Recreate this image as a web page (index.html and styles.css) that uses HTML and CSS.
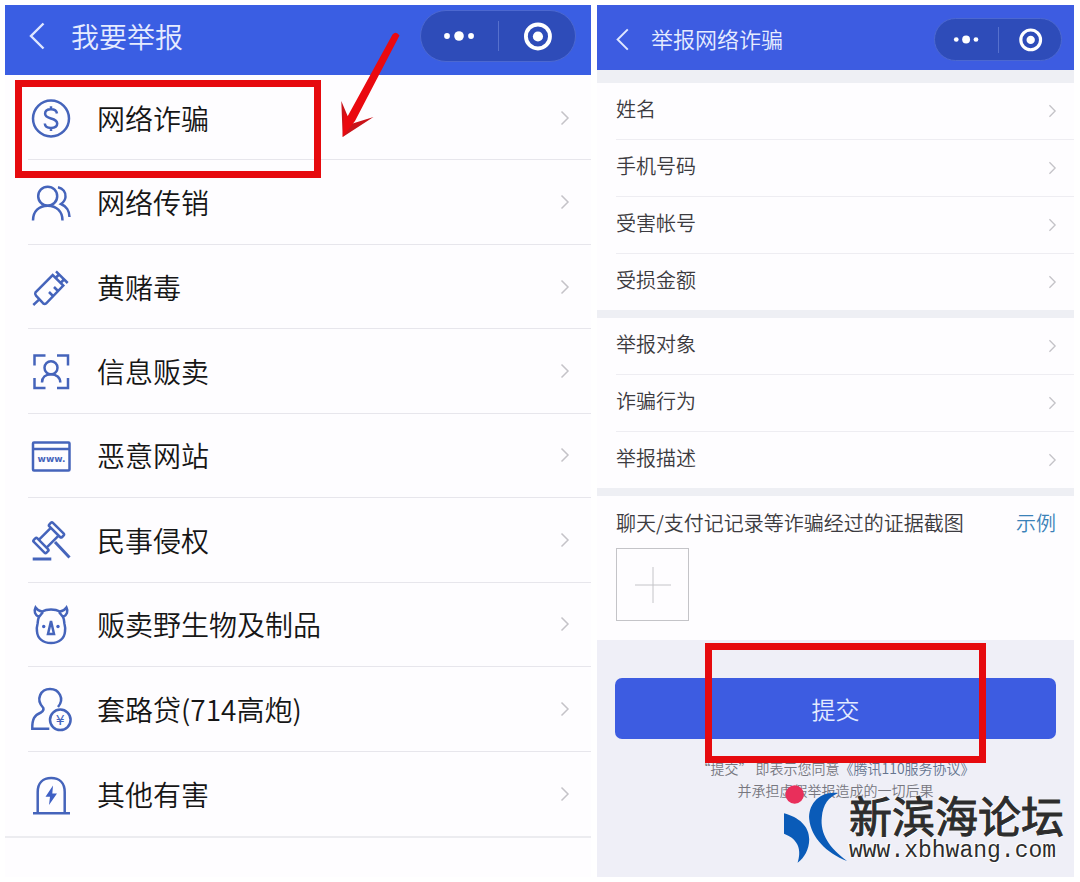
FILE: index.html
```html
<!DOCTYPE html>
<html lang="zh-CN">
<head>
<meta charset="utf-8">
<meta name="viewport" content="width=device-width, initial-scale=1">
<title>我要举报</title>
<link rel="stylesheet" href="styles.css">
</head>
<body>
<svg class="defs" aria-hidden="true">
  <symbol id="more" viewBox="0 0 78 52"><circle cx="26" cy="26" r="3"/><circle cx="38.500" cy="26" r="5"/><circle cx="51" cy="26" r="3"/></symbol>
  <symbol id="target" viewBox="0 0 78 52"><circle cx="40.500" cy="26.500" r="12.500" fill="none" stroke="currentColor" stroke-width="4"/><circle cx="40.500" cy="26.500" r="5.300"/></symbol>
  <symbol id="back" viewBox="0 0 16 28"><path d="M14.500 1.500 2 14l12.500 12.500" fill="none" stroke="currentColor" stroke-width="2.400"/></symbol>
  <symbol id="next" viewBox="0 0 10 16"><path d="M1.500 1.500 8 8l-6.500 6.500" fill="none" stroke="currentColor" stroke-width="1.500"/></symbol>
</svg>
<main class="page">
  <section class="panel menu">
    <header class="bar">
      <button class="back" aria-label="返回"><svg><use href="#back"/></svg></button>
      <h1 class="title">我要举报</h1>
      <div class="capsule">
        <button aria-label="更多"><svg><use href="#more"/></svg></button>
        <button aria-label="关闭"><svg><use href="#target"/></svg></button>
      </div>
    </header>
    <ul class="list">
      <li><button class="item">
        <svg class="icon" viewBox="0 0 44 44"><circle cx="22" cy="22.500" r="18"/><path d="M28 17.500C27.500 14.500 25 13.300 22 13.300c-3.500 0-5.900 1.700-5.900 4.500 0 2.800 2.400 3.700 5.900 4.700 4 1.100 6.200 2.300 6.200 5 0 2.800-2.500 4.400-6.200 4.400s-6-1.500-6.200-4.400M22 10.300v3.200M22 31.700v3.200"/></svg>
        <span class="name">网络诈骗</span><svg class="next"><use href="#next"/></svg></button>
        <span class="mark mark-item"></span></li>
      <li><button class="item">
        <svg class="icon" viewBox="0 0 44 44"><circle cx="18.700" cy="16.200" r="9.500"/><path d="M4 40.500c0-9 6-14.800 14.700-14.800s14.800 5.800 14.800 14.800M29 7.300c5 1.200 7.900 5 7.500 9.700-.3 3.500-2 5.200-4.500 7 5 2 8.500 7 8.500 13"/></svg>
        <span class="name">网络传销</span><svg class="next"><use href="#next"/></svg></button></li>
      <li><button class="item">
        <svg class="icon" viewBox="0 0 44 44"><path d="M6.500 27.300 23.700 10l10.600 10.600L17 38.500c-1 .8-2 .6-3-.3l-7-7.500c-1-1.200-1-2.400-.5-3.400zM4.300 40l6-5.600M27 6.300 38.700 18M26.500 13l4-4M31.500 18l4-4M29 26l-4-4M24 31l-4-4"/></svg>
        <span class="name">黄赌毒</span><svg class="next"><use href="#next"/></svg></button></li>
      <li><button class="item">
        <svg class="icon" viewBox="0 0 44 44"><path d="M5.500 16.500v-10h11M28 6.500h11v10M39 29v10H28M16.500 39h-11V29"/><circle cx="22" cy="18.800" r="6.500"/><path d="M13 33.500c0-5 3.600-8.200 9-8.200s9.300 3.200 9.300 8.200"/></svg>
        <span class="name">信息贩卖</span><svg class="next"><use href="#next"/></svg></button></li>
      <li><button class="item">
        <svg class="icon" viewBox="0 0 44 44"><rect x="4" y="9.500" width="36.500" height="28" rx="1"/><path d="M4 16h36.500"/><text class="glyph" x="22.500" y="29" font-size="9">www.</text></svg>
        <span class="name">恶意网站</span><svg class="next"><use href="#next"/></svg></button></li>
      <li><button class="item">
        <svg class="icon" viewBox="0 0 44 44"><g transform="translate(19.700 19.700) rotate(-45)"><rect x="8.500" y="-9" width="5" height="18" rx="1.500"/><rect x="-13.500" y="-9" width="5" height="18" rx="1.500"/><path d="M-8.500-5.500h17M-8.500 5.500h17"/></g><path d="M26 24 40.500 39.500" stroke-width="3"/><path d="M3.700 41h18.600" stroke-width="3"/></svg>
        <span class="name">民事侵权</span><svg class="next"><use href="#next"/></svg></button></li>
      <li><button class="item">
        <svg class="icon" viewBox="0 0 44 44"><path d="M13 9.500c5-2.800 13-2.800 18 0 2.500-.3 5-1.800 6.500-4 1.800 3.500.7 7.500-3.500 9.500 1.500 3 1 5 1.500 7 .6 2 .9 4 .5 7.500C35.500 36.500 30 41 22 41S8.500 36.500 8 29.500c-.4-3.500-.1-5.500.5-7.500.5-2 0-4 1.500-7-4.200-2-5.300-6-3.500-9.500 1.500 2.200 4 3.700 6.500 4zM10 15l4-5M34 15l-4-5M22 19l-3 13h6z"/><circle class="solid" cx="14.700" cy="24.500" r="1.700"/><circle class="solid" cx="29" cy="24.500" r="1.700"/></svg>
        <span class="name">贩卖野生物及制品</span><svg class="next"><use href="#next"/></svg></button></li>
      <li><button class="item">
        <svg class="icon" viewBox="0 0 44 44"><path d="M29 20c7-8.500 1-18-8-18s-15 10-6.700 19c.7 2-.3 3.300-2.300 4.500C5.500 28 3 32 3.300 41.800h17"/><circle cx="31.300" cy="32.800" r="10.300"/><text class="glyph yen" x="31.300" y="38" font-size="14">¥</text></svg>
        <span class="name">套路贷(714高炮)</span><svg class="next"><use href="#next"/></svg></button></li>
      <li><button class="item">
        <svg class="icon" viewBox="0 0 44 44"><path d="M8.700 41V20C8.700 11 14 6 22.200 6s13.500 5 13.500 14v21M4 41.200h37"/><path class="solid" d="m24 13.500-7.500 11.300H21L20 33l8-11.600h-4.700z"/></svg>
        <span class="name">其他有害</span><svg class="next"><use href="#next"/></svg></button></li>
    </ul>
    <svg class="arrow" viewBox="0 0 60 108"><path class="barb" d="M1.300 69 2.700 105 33.500 85 11 92z"/><path class="shaft" d="M52.500 2.500q3.500-4 7 1L15 89l-12.300 16L4 80l3.500 4.500z"/></svg>
  </section>

  <section class="panel report">
    <header class="bar bar-small">
      <button class="back" aria-label="返回"><svg><use href="#back"/></svg></button>
      <h2 class="title">举报网络诈骗</h2>
      <div class="capsule">
        <button aria-label="更多"><svg><use href="#more"/></svg></button>
        <button aria-label="关闭"><svg><use href="#target"/></svg></button>
      </div>
    </header>
    <div class="groups">
      <ul class="fields">
        <li><button class="field"><span>姓名</span><svg class="next"><use href="#next"/></svg></button></li>
        <li><button class="field"><span>手机号码</span><svg class="next"><use href="#next"/></svg></button></li>
        <li><button class="field"><span>受害帐号</span><svg class="next"><use href="#next"/></svg></button></li>
        <li><button class="field"><span>受损金额</span><svg class="next"><use href="#next"/></svg></button></li>
      </ul>
      <ul class="fields">
        <li><button class="field"><span>举报对象</span><svg class="next"><use href="#next"/></svg></button></li>
        <li><button class="field"><span>诈骗行为</span><svg class="next"><use href="#next"/></svg></button></li>
        <li><button class="field"><span>举报描述</span><svg class="next"><use href="#next"/></svg></button></li>
      </ul>
      <div class="evidence">
        <div class="evidence-head"><span>聊天/支付记记录等诈骗经过的证据截图</span><a href="#">示例</a></div>
        <button class="add" aria-label="添加截图"><svg viewBox="0 0 36 36"><path d="M18 0v36M0 18h36"/></svg></button>
      </div>
    </div>
    <div class="submit-area">
      <button class="submit">提交</button>
      <p class="terms">“提交” 即表示您同意<a href="#">《腾讯110服务协议》</a><br>并承担虚假举报造成的一切后果</p>
      <span class="mark mark-submit"></span>
    </div>
    <div class="brand">
      <svg class="brand-logo" viewBox="0 0 66 82"><circle cx="11" cy="9.500" r="9.500" fill="#e92f5b"/><path d="M0 29c15 4 26 13 26 27 0 10-5 19-12 24 4-12 2-24-14-30z"/><path d="M56 8C35 6 25 21 26 35c2 19 18 35 39 43C47 65 37 50 39 33 40 20 46 12 56 8z"/></svg>
      <div class="brand-text"><strong>新滨海论坛</strong><span>www.xbhwang.com</span></div>
    </div>
  </section>
</main>
</body>
</html>
```
FILE: styles.css
```css
* { box-sizing: border-box; }

body {
  margin: 0;
  background: #fff;
  color: #161616;
  font-family: "Noto Sans CJK SC", sans-serif;
  font-weight: 350;
}

button {
  padding: 0;
  border: 0;
  background: none;
  color: inherit;
  font: inherit;
  text-align: left;
}

ul { margin: 0; padding: 0; list-style: none; }
a { color: inherit; text-decoration: none; }
svg { display: block; fill: currentColor; }
.defs { position: absolute; width: 0; height: 0; }

.page {
  display: grid;
  grid-template-columns: 586fr 477fr;
  gap: 6px;
  min-height: 100vh;
  padding: 5px 6px 5px 5px;
}

.panel {
  position: relative;
  display: flex;
  flex-direction: column;
  background: #fefdff;
}

/* Title bars */
.bar {
  display: flex;
  align-items: center;
  height: 70px;
  padding: 0 15px 8px 24px;
  background: #3a5ee3;
  color: #fff;
}
.back { width: 16px; color: #dfe7ff; }
.back svg { width: 16px; height: 28px; }
.title {
  flex: 1;
  margin: 0 0 0 26px;
  color: #e6ecff;
  font-size: 28px;
  font-weight: 350;
  line-height: 40px;
}
.capsule {
  display: flex;
  border: 1px solid #4c68d0;
  border-radius: 26px;
  background: #2e4cb9;
}
.capsule svg { width: 77px; height: 50px; }
.capsule button + button::before {
  content: "";
  position: absolute;
  height: 30px;
  margin-top: 10px;
  border-left: 1px solid #5670cd;
}

.bar-small { height: 65px; padding: 3px 12px 0 19px; background: #3d5ce1; }
.bar-small .back svg { width: 13px; height: 23px; }
.bar-small .title { margin-left: 19px; padding-bottom: 2px; font-size: 22px; line-height: 32px; }
.bar-small .capsule svg { width: 63px; height: 41px; }
.bar-small .capsule button + button::before { height: 26px; margin-top: 8px; }

/* Category list */
.menu { padding-bottom: 39px; }
.list {
  flex: 1;
  display: flex;
  flex-direction: column;
  padding-top: 1px;
  border-bottom: 2px solid #ececf0;
}
.list li { position: relative; flex: 1; display: flex; padding-left: 23px; }
.item {
  flex: 1;
  display: flex;
  align-items: center;
  padding: 0 21px 0 1px;
  border-bottom: 1px solid #e7e6ec;
}
.list li:last-child .item { border-bottom: 0; }
.icon {
  width: 44px;
  height: 44px;
  overflow: visible;
  fill: none;
  stroke: #4564bb;
  stroke-width: 2.5;
}
.icon .solid { fill: #3f60c4; stroke: none; }
.glyph {
  fill: #4564bb;
  stroke: none;
  font-family: "DejaVu Sans", sans-serif;
  font-weight: 700;
  text-anchor: middle;
}
.yen { font-weight: 400; }
.name {
  flex: 1;
  margin-left: 24px;
  font-size: 28px;
  line-height: 40px;
}
.next { width: 10px; height: 16px; color: #c4c3c8; }

/* Report form */
.report { color: #3c3b40; }
.groups {
  display: flex;
  flex-direction: column;
  gap: 8px;
  padding-top: 13px;
  background: #eeeff4;
}
.fields { background: #fefdff; }
.fields li { padding-left: 19px; }
.field {
  display: flex;
  align-items: center;
  justify-content: space-between;
  width: 100%;
  height: 56px;
  padding-right: 17px;
  font-size: 20px;
}
.field span { padding-bottom: 5px; }
.field .next { width: 9px; height: 14px; }
.fields li + li .field { height: 57px; border-top: 1px solid #eeedf2; }

.evidence { padding: 12px 18px 19px 19px; background: #fefdff; }
.evidence-head {
  display: flex;
  justify-content: space-between;
  margin-bottom: 10px;
  font-size: 20px;
  line-height: 30px;
}
.evidence-head a { color: #3b82b8; }
.add {
  display: grid;
  place-items: center;
  width: 73px;
  height: 73px;
  border: 1px solid #c4c4c8;
}
.add svg { width: 36px; height: 36px; stroke: #c4c4c8; stroke-width: 1; }

.submit-area {
  position: relative;
  flex: 1;
  padding: 38px 18px 0;
  background: #efeff7;
}
.submit {
  display: block;
  width: 100%;
  height: 61px;
  border-radius: 7px;
  background: #3d5ce1;
  color: #e3ebff;
  font-size: 24px;
  text-align: center;
}
.terms {
  margin: 18px 0 0;
  color: #77777f;
  font-size: 14px;
  line-height: 22px;
  text-align: center;
}
.terms a { color: #65748f; }

/* Highlights drawn over the screens */
.mark { position: absolute; pointer-events: none; }
.mark-item {
  z-index: 1;
  top: 4px;
  left: 10px;
  width: 306px;
  height: 98px;
  border: 7px solid #e60a0e;
}
.mark-submit {
  top: 3px;
  left: 108px;
  width: 281px;
  height: 120px;
  border: 7px solid #e60a0e;
}
.arrow { position: absolute; top: 27px; left: 335px; width: 60px; height: 108px; }
.arrow .barb { fill: #c9141a; }
.arrow .shaft { fill: #ea090f; }

/* Forum signature */
.brand {
  position: absolute;
  right: 10px;
  bottom: 11px;
  display: flex;
  gap: 1px;
  color: #2d2d2d;
}
.brand-logo { width: 64px; height: 82px; fill: #0a5bb8; }
.brand-text {
  display: flex;
  flex-direction: column;
  padding-top: 6px;
  text-shadow: 0 0 2px #fff, 0 0 2px #fff, 1px 1px 1px #fff, -1px -1px 1px #fff;
}
.brand-text strong { font-size: 43px; font-weight: 400; line-height: 48px; -webkit-text-stroke: 1px #2d2d2d; }
.brand-text span { font-family: "Liberation Mono", monospace; font-size: 23px; font-weight: 400; line-height: 26px; }
```
